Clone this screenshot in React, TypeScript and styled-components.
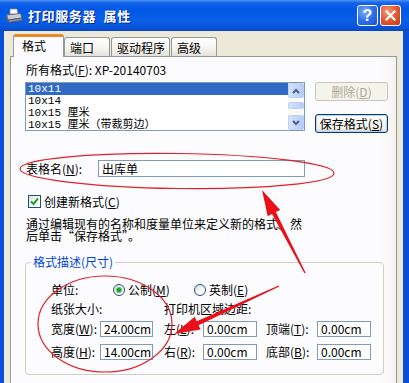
import React from 'react';
import styled, { createGlobalStyle } from 'styled-components';

const GlobalStyle = createGlobalStyle`
  html, body { margin: 0; padding: 0; }
  body {
    width: 409px; height: 383px; overflow: hidden;
    background: #0A55D8;
    font-family: "Noto Sans CJK SC", "Noto Sans", sans-serif;
    font-size: 12px; line-height: 14px; color: #000;
  }
  * { box-sizing: border-box; }
`;

const Window = styled.div`
  position: relative;
  width: 409px; height: 383px;
  display: flex; flex-direction: column;
  overflow: hidden;
`;

const TitleBar = styled.div`
  flex: none; height: 31px;
  display: flex; align-items: center;
  padding: 0 8px 0 5px;
  background: linear-gradient(to bottom, #4A93F5 0px, #1463E8 3px, #0058E6 9px, #0A5EE8 20px, #0656DC 27px, #0A46C0 31px);
`;

const TitleText = styled.div`
  flex: 1;
  margin-left: 5px;
  color: #fff;
  font-weight: 700;
  font-size: 13px;
  letter-spacing: 0.6px;
  word-spacing: 4px;
  text-shadow: 1px 1px 0 #0B2A8A;
  white-space: pre;
`;

const CaptionButton = styled.div<{ $kind: 'help' | 'close' }>`
  width: 21px; height: 21px;
  margin-left: 2px;
  border: 1px solid #fff;
  border-radius: 3px;
  display: flex; align-items: center; justify-content: center;
  color: #fff; font-weight: 700; font-size: 16px;
  font-family: "Liberation Sans", sans-serif;
  background: ${p => p.$kind === 'close'
    ? 'radial-gradient(circle at 35% 30%, #F29C7E 0%, #E3582F 50%, #C8390F 100%)'
    : 'radial-gradient(circle at 35% 30%, #7EB0FA 0%, #2E6FEA 50%, #1A4FD0 100%)'};
`;

const Frame = styled.div`
  flex: 1;
  display: flex; flex-direction: column;
  background: #ECE9D8;
  border-left: 4px solid #0B4FD6;
  border-right: 6px solid #0B4FD6;
  padding: 3px 6px 0 6px;
  min-height: 0;
`;

const TabStrip = styled.div`
  flex: none;
  height: 22px;
  display: flex; align-items: flex-end;
  padding-left: 3px;
`;

const Tab = styled.div<{ $w: number; $gap: number; $active?: boolean }>`
  position: relative;
  z-index: ${p => (p.$active ? 2 : 0)};
  width: ${p => p.$w}px;
  height: ${p => (p.$active ? 23 : 19)}px;
  margin-left: ${p => p.$gap}px;
  margin-bottom: ${p => (p.$active ? -1 : 0)}px;
  padding: ${p => (p.$active ? '0 0 3px 8px' : '2px 0 0 5px')};
  display: flex; align-items: center;
  border: 1px solid #919B9C;
  border-bottom: none;
  border-top: ${p => (p.$active ? '3px solid #E68B2C' : '1px solid #919B9C')};
  border-radius: 3px 3px 0 0;
  background: ${p => (p.$active ? '#FCFCFE' : 'linear-gradient(#FFFFFF, #F4F3EE 60%, #E4E2D8)')};
  white-space: nowrap;
`;

const Panel = styled.div`
  flex: 1;
  display: flex; flex-direction: column;
  border: 1px solid #919B9C;
  border-bottom: none;
  background: linear-gradient(to right, #FCFCFE 96%, #F4F3EE);
  padding: 6px 0 0 14px;
`;

const TextLine = styled.div<{ $mt?: number }>`
  margin-top: ${p => p.$mt ?? 0}px;
  margin-left: 1px;
  height: 14px;
  white-space: pre;
`;

const ListRow = styled.div`
  display: flex;
  margin-top: 5px;
`;

const ListBox = styled.div`
  width: 280px; height: 49px;
  border: 1px solid #7F9DB9;
  background: #fff;
  display: flex;
`;

const ListItems = styled.div`
  flex: 1;
  display: flex; flex-direction: column;
`;

const ListItem = styled.div<{ $selected?: boolean }>`
  height: 12px; line-height: 12px;
  flex: none;
  padding-left: 2px;
  font-family: "Liberation Mono", "Noto Sans CJK SC", monospace;
  font-size: 11px;
  white-space: pre;
  background: ${p => (p.$selected ? '#316AC5' : 'transparent')};
  color: ${p => (p.$selected ? '#fff' : '#000')};
`;

const ScrollBar = styled.div`
  width: 16px;
  display: flex; flex-direction: column;
  background: #FBFBF8;
`;

const ScrollPiece = styled.div<{ $h: number; $mt?: number }>`
  height: ${p => p.$h}px;
  margin-top: ${p => p.$mt ?? 0}px;
  border: 1px solid #BCCFF6;
  border-radius: 2px;
  background: linear-gradient(to right, #D6E3FD, #C3D5FB 60%, #B5CAF5);
  display: flex; align-items: center; justify-content: center;
`;

const ButtonCol = styled.div`
  width: 73px;
  margin-left: 10px;
  display: flex; flex-direction: column;
  gap: 13px;
`;

const Button = styled.div<{ $disabled?: boolean }>`
  height: 19px;
  border: 1px solid ${p => (p.$disabled ? '#C9C7BA' : '#003C74')};
  border-radius: 3px;
  display: flex; align-items: center; justify-content: center;
  color: ${p => (p.$disabled ? '#ACA899' : '#000')};
  background: ${p => (p.$disabled ? '#F5F4EA' : 'linear-gradient(#FFFFFF, #F0EFE9 80%, #D8D2C6)')};
  box-shadow: ${p => (p.$disabled ? 'none' : 'inset 0 0 0 1px #BCD3F5')};
  white-space: pre;
`;

const NameRow = styled.div`
  display: flex; align-items: center;
  margin-top: 27px;
`;

const FieldLabel = styled.div<{ $w: number; $ml?: number }>`
  width: ${p => p.$w}px;
  margin-left: ${p => p.$ml ?? 0}px;
  padding-left: 1px;
  white-space: pre;
  flex: none;
`;

const TextBox = styled.div<{ $w: number; $h?: number }>`
  width: ${p => p.$w}px;
  height: ${p => p.$h ?? 16}px;
  border: 1px solid #7F9DB9;
  background: #fff;
  padding-left: 3px;
  display: flex; align-items: center;
  white-space: pre;
  flex: none;
`;

const CheckRow = styled.div`
  display: flex; align-items: center;
  margin-top: 18px;
  height: 13px;
`;

const CheckBox = styled.div`
  width: 13px; height: 13px;
  margin-left: 3px;
  border: 1px solid #1C5180;
  background: linear-gradient(135deg, #DCDCD7, #FFFFFF 70%);
  display: flex; align-items: center; justify-content: center;
`;

const CheckLabel = styled.div`
  margin-left: 3px;
  white-space: pre;
`;

const Desc = styled.div`
  margin-top: 10px;
  margin-left: 1px;
  line-height: 12px;
  white-space: pre;
`;

const Group = styled.fieldset`
  margin: 13px 0 0 0;
  padding: 0;
  width: 359px;
  border: 1px solid #D0D0BF;
  border-radius: 4px;
  min-width: 0;
`;

const Legend = styled.legend`
  margin-left: 5px;
  padding: 0 2px;
  color: #0046D5;
  line-height: 14px;
`;

const GroupBody = styled.div`
  padding: 13px 0 14px 24px;
  display: flex; flex-direction: column;
`;

const Row = styled.div<{ $h: number; $mt?: number }>`
  display: flex; align-items: center;
  height: ${p => p.$h}px;
  margin-top: ${p => p.$mt ?? 0}px;
`;

const RadioItem = styled.div<{ $w?: number }>`
  display: flex; align-items: center;
  width: ${p => (p.$w ? `${p.$w}px` : 'auto')};
  flex: none;
`;

const RadioCircle = styled.div<{ $checked?: boolean }>`
  width: 12px; height: 12px;
  border-radius: 50%;
  border: 1px solid #1C5180;
  background: linear-gradient(135deg, #DCDCD7, #FFFFFF 70%);
  display: flex; align-items: center; justify-content: center;
  &::after {
    content: '';
    display: ${p => (p.$checked ? 'block' : 'none')};
    width: 4px; height: 4px; border-radius: 50%;
    background: #21A121;
    box-shadow: 0 0 0 1px #5BC25B;
  }
`;

const RadioLabel = styled.div`
  margin-left: 3px;
  white-space: pre;
`;

const Overlay = styled.svg`
  position: absolute;
  left: 0; top: 0;
  pointer-events: none;
`;

const U = styled.span`
  text-decoration: underline;
`;

function arrowPoints(tx: number, ty: number, px: number, py: number) {
  const dx = px - tx, dy = py - ty;
  const len = Math.hypot(dx, dy);
  const ux = dx / len, uy = dy / len;
  const nx = -uy, ny = ux;
  const head = 26;
  const bx = px - ux * head, by = py - uy * head;
  const pts: [number, number][] = [
    [tx + nx * 0.7, ty + ny * 0.7],
    [bx + nx * 2.2, by + ny * 2.2],
    [bx + nx * 7, by + ny * 7],
    [px, py],
    [bx - nx * 7, by - ny * 7],
    [bx - nx * 2.2, by - ny * 2.2],
    [tx - nx * 0.7, ty - ny * 0.7],
  ];
  return pts.map(p => `${p[0].toFixed(1)},${p[1].toFixed(1)}`).join(' ');
}

const PrinterIcon = () => (
  <svg width="18" height="18" viewBox="0 0 18 18">
    <path d="M5 2 L12 2 L13 7 L5 7 Z" fill="#fff" stroke="#8A8A8A" strokeWidth="0.8" />
    <path d="M1.5 8 L15.5 6.5 L17 11 L3 13 Z" fill="#C9CCD3" stroke="#5E6470" strokeWidth="0.8" />
    <path d="M3 13 L17 11 L17 13.5 L3.5 15.5 Z" fill="#8C929E" stroke="#4F5560" strokeWidth="0.8" />
    <path d="M1.5 8 L3 13 L3.5 15.5 L1.5 11 Z" fill="#A8ADB7" stroke="#4F5560" strokeWidth="0.6" />
  </svg>
);

const Chevron = ({ up }: { up?: boolean }) => (
  <svg width="8" height="6" viewBox="0 0 8 6">
    <polyline
      points={up ? '1,5 4,2 7,5' : '1,1 4,4 7,1'}
      fill="none" stroke="#4D6185" strokeWidth="2"
    />
  </svg>
);

export default function App() {
  return (
    <Window>
      <GlobalStyle />
      <TitleBar>
        <PrinterIcon />
        <TitleText>打印服务器 属性</TitleText>
        <CaptionButton $kind="help">?</CaptionButton>
        <CaptionButton $kind="close">
          <svg width="11" height="11" viewBox="0 0 11 11">
            <path d="M1.5 1.5 L9.5 9.5 M9.5 1.5 L1.5 9.5" stroke="#fff" strokeWidth="2.2" strokeLinecap="square" />
          </svg>
        </CaptionButton>
      </TitleBar>
      <Frame>
        <TabStrip>
          <Tab $w={51} $gap={0} $active>格式</Tab>
          <Tab $w={46} $gap={0}>端口</Tab>
          <Tab $w={59} $gap={1}>驱动程序</Tab>
          <Tab $w={46} $gap={1}>高级</Tab>
        </TabStrip>
        <Panel>
          <TextLine>所有格式(<U>F</U>): XP-20140703</TextLine>
          <ListRow>
            <ListBox>
              <ListItems>
                <ListItem $selected>10x11</ListItem>
                <ListItem>10x14</ListItem>
                <ListItem>10x15 厘米</ListItem>
                <ListItem>10x15 厘米（带裁剪边）</ListItem>
              </ListItems>
              <ScrollBar>
                <ScrollPiece $h={15}><Chevron up /></ScrollPiece>
                <ScrollPiece $h={7} $mt={4} />
                <ScrollPiece $h={15} $mt={6}><Chevron /></ScrollPiece>
              </ScrollBar>
            </ListBox>
            <ButtonCol>
              <Button $disabled>删除(<U>D</U>)</Button>
              <Button>保存格式(<U>S</U>)</Button>
            </ButtonCol>
          </ListRow>
          <NameRow>
            <FieldLabel $w={73}>表格名(<U>N</U>):</FieldLabel>
            <TextBox $w={207} $h={17}>出库单</TextBox>
          </NameRow>
          <CheckRow>
            <CheckBox>
              <svg width="9" height="9" viewBox="0 0 9 9">
                <polyline points="1,4.5 3.5,7 8,1.5" fill="none" stroke="#21A121" strokeWidth="2" />
              </svg>
            </CheckBox>
            <CheckLabel>创建新格式(<U>C</U>)</CheckLabel>
          </CheckRow>
          <Desc>{'通过编辑现有的名称和度量单位来定义新的格式。然\n后单击“保存格式”。'}</Desc>
          <Group>
            <Legend>格式描述(尺寸)</Legend>
            <GroupBody>
              <Row $h={16}>
                <FieldLabel $w={63}>单位:</FieldLabel>
                <RadioItem $w={81}>
                  <RadioCircle $checked />
                  <RadioLabel>公制(<U>M</U>)</RadioLabel>
                </RadioItem>
                <RadioItem>
                  <RadioCircle />
                  <RadioLabel>英制(<U>E</U>)</RadioLabel>
                </RadioItem>
              </Row>
              <Row $h={14} $mt={4}>
                <FieldLabel $w={113}>纸张大小:</FieldLabel>
                <FieldLabel $w={120}>打印机区域边距:</FieldLabel>
              </Row>
              <Row $h={16} $mt={5}>
                <FieldLabel $w={50}>宽度(<U>W</U>):</FieldLabel>
                <TextBox $w={53}>24.00cm</TextBox>
                <FieldLabel $w={40} $ml={10}>左(<U>L</U>):</FieldLabel>
                <TextBox $w={54}>0.00cm</TextBox>
                <FieldLabel $w={52} $ml={8}>顶端(<U>T</U>):</FieldLabel>
                <TextBox $w={54}>0.00cm</TextBox>
              </Row>
              <Row $h={16} $mt={7}>
                <FieldLabel $w={50}>高度(<U>H</U>):</FieldLabel>
                <TextBox $w={53}>14.00cm</TextBox>
                <FieldLabel $w={40} $ml={10}>右(<U>R</U>):</FieldLabel>
                <TextBox $w={54}>0.00cm</TextBox>
                <FieldLabel $w={52} $ml={8}>底部(<U>B</U>):</FieldLabel>
                <TextBox $w={54}>0.00cm</TextBox>
              </Row>
            </GroupBody>
          </Group>
        </Panel>
      </Frame>
      <Overlay width="409" height="383" viewBox="0 0 409 383">
        <ellipse cx="177" cy="171" rx="157" ry="17.5" fill="none" stroke="#E0202A" strokeWidth="1.2" transform="rotate(0.8 177 171)" />
        <ellipse cx="105" cy="324" rx="67" ry="48" fill="none" stroke="#E0202A" strokeWidth="1.2" />
        <polygon points={arrowPoints(305, 273, 262, 190)} fill="#E8101A" />
        <polygon points={arrowPoints(279, 286, 174, 334)} fill="#E8101A" />
      </Overlay>
    </Window>
  );
}
